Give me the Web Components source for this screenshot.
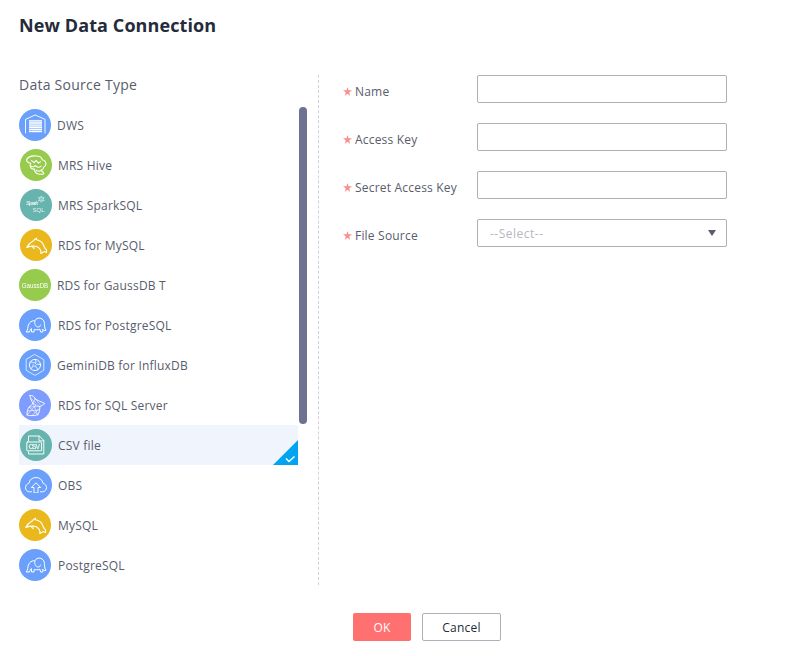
<!DOCTYPE html>
<html lang="en">
<head>
<meta charset="utf-8">
<title>New Data Connection</title>
<style>
html,body{margin:0;padding:0;background:#fff;}
body{font-family:"Open Sans","Noto Sans",sans-serif;color:#575d6c;letter-spacing:.2px;}
</style>
</head>
<body>
<x-dialog heading="New Data Connection">
  <x-source-list slot="left" heading="Data Source Type">
    <x-source-item icon="dws" label="DWS" gap="6"></x-source-item>
    <x-source-item icon="hive" label="MRS Hive" shift="1" gap="6"></x-source-item>
    <x-source-item icon="spark" label="MRS SparkSQL" shift="1" gap="6"></x-source-item>
    <x-source-item icon="dolphin" label="RDS for MySQL" shift="1" gap="6"></x-source-item>
    <x-source-item icon="gauss" label="RDS for GaussDB T" gap="6"></x-source-item>
    <x-source-item icon="elephant" label="RDS for PostgreSQL" gap="7"></x-source-item>
    <x-source-item icon="gemini" label="GeminiDB for InfluxDB" gap="6"></x-source-item>
    <x-source-item icon="sqlserver" label="RDS for SQL Server" gap="7"></x-source-item>
    <x-source-item icon="csv" label="CSV file" shift="1" gap="6" selected></x-source-item>
    <x-source-item icon="obs" label="OBS" shift="1" gap="6"></x-source-item>
    <x-source-item icon="dolphin" label="MySQL" gap="7"></x-source-item>
    <x-source-item icon="elephant" label="PostgreSQL" gap="7"></x-source-item>
  </x-source-list>
  <x-form-row slot="right" label="Name"><x-text-box></x-text-box></x-form-row>
  <x-form-row slot="right" label="Access Key"><x-text-box></x-text-box></x-form-row>
  <x-form-row slot="right" label="Secret Access Key"><x-text-box></x-text-box></x-form-row>
  <x-form-row slot="right" label="File Source"><x-select-box placeholder="--Select--"></x-select-box></x-form-row>
  <x-button slot="footer" variant="primary" width="58">OK</x-button>
  <x-button slot="footer" width="79">Cancel</x-button>
</x-dialog>
<script>
const S='fill="none" stroke="#fff" stroke-linecap="round" stroke-linejoin="round"';
const dolphin=`<path ${S} stroke-width="1.100" d="M6.800 18.600C7.800 16.400 9.800 14 12.400 12.600 13.600 11.400 14.800 10 16.600 9.200L16.400 10.800C19.800 11.300 22.600 13.300 23.800 16.700 24.400 18.400 25.200 19.900 26.600 20.900L26.500 23.400 24.400 22.500 20.800 24.500C21.300 22.200 20 19.400 17.200 17.800 15.800 17.100 13.800 16.900 12 17.100 10.200 17.300 8.400 17.800 6.800 18.600Z"/><path ${S} stroke-width="1" d="M13.800 17.200L14.200 19.800C13.200 19.300 12.400 18.400 12.100 17.300"/>`;
const elephant=`<path ${S} stroke-width="1" d="M7.500 22.700C9 21 8.700 18 9.500 15.800 10.500 13 13 11.500 15.700 11.800 16.800 9.800 19 8.700 21.200 9.200 24 9.800 25.300 12 25.400 14.500 25.500 17 25.700 19.500 27 21.300 25.800 22 24.500 21.500 23.800 20.300L23.800 23H21.500L21 20.300C19 20.900 17 20.900 15.200 20.400L15 23H12.600L12.400 19.500C11.500 20 11 21 10.600 22.700Z"/><path ${S} stroke-width=".9" d="M16 11.900C15 14.500 16.300 17.500 19 18 20.500 18.200 21.300 17.300 21.500 16"/>`;
const ICONS={
 dws:{c:'#6aa0fb',s:`<path ${S} stroke-width=".9" d="M6.500 24V10.300L16.200 6 26 10.300V24"/><path d="M10 10.800h13v13H10z" fill="#fff" fill-opacity=".25"/><path d="M10 11.900h13M10 14h13M10 16.100h13M10 18.200h13M10 20.300h13M10 22.400h13" stroke="#fff" stroke-width="1.350" fill="none"/>`},
 hive:{c:'#96cb4e',s:`<path ${S} stroke-width="1.100" d="M7 9.800c1.800-2.300 5-3.300 8.500-2.800 3.300-.2 6.100 1.300 6.800 3.700 1.900 .5 3.700 2.200 3.600 4.300-.1 1.500-.9 2.500-2 2.900-.3 1.900-1.500 3-2.900 3.400 1.400 .9 2.300 2.200 2.800 3.400-2.600 .9-5.500 .7-7.800-.7-1-1.100-1.500-2.500-1.300-4-1.700 .3-3.400-.4-4.100-1.800-.7-1.400-.5-2.700 .2-3.700C7 13.300 5.900 11.400 7 9.800z"/><path ${S} stroke-width="1.100" d="M11.600 11.600l2.600 2 1.900-2.200 2.400 2.700 2-1.300M11.300 17.200c1.300 .7 2.900 .5 4.100-.6 1.600 2 3.900 2.200 5.700 .6M16.300 21.400c1.500 .7 3.100 .9 4.600 .4"/>`},
 spark:{c:'#67b3ad',s:`<text x="6" y="15.900" letter-spacing="0" font-family="Liberation Sans,sans-serif" font-style="italic" font-weight="700" font-size="6.200" fill="#fff" fill-opacity=".75" textLength="12.500">Spark</text><path d="M21.300 6.800l.9 2 2.100-.4-1.300 1.700 1.300 1.700-2.100-.3-.9 1.900-.9-1.900-2.100.3 1.300-1.700-1.300-1.700 2.100.4z" fill="#fff" fill-opacity=".25" stroke="#fff" stroke-opacity=".8" stroke-width=".6"/><text x="12.400" y="23.300" letter-spacing="0" font-family="Liberation Sans,sans-serif" font-size="6.200" fill="#fff" fill-opacity=".85">SQL</text>`},
 dolphin:{c:'#eab71c',s:dolphin},
 gauss:{c:'#96cb4e',s:`<text x="16" y="18.500" letter-spacing="0" text-anchor="middle" font-family="Liberation Sans,sans-serif" font-size="7.100" fill="#fff" textLength="26.500" lengthAdjust="spacingAndGlyphs">GaussDB</text>`},
 elephant:{c:'#6aa0fb',s:elephant},
 gemini:{c:'#6aa0fb',s:`<path ${S} stroke-width=".85" stroke-opacity=".85" d="M16 5.600l8.800 5.100v10.600L16 26.400l-8.800-5.100V10.700z"/><circle cx="16" cy="16" r="5.600" ${S} stroke-width=".95"/><path ${S} stroke-width=".9" d="M16 10.600c1.300 1.600 1.400 3 .2 4.300M21.200 15.600c-1.800-.9-3.400-.7-4.500 .7M18.600 20.700c-.2-1.900-1.200-3.100-3-3.400M11.900 19.600c1.500-.9 2.300-2.200 2.300-3.700M11.300 12.700c1.500 .9 2.800 1.200 4 .8"/>`},
 sqlserver:{c:'#7f9cff',s:`<path ${S} stroke-width=".9" d="M11 6.500C13.500 6.300 15.500 7.500 16 9.500 18 11.500 22 12.500 25.800 14.500 24 16 22.500 17 20.800 17.500 21 20 20.500 23.500 18.800 25.800 15 26.800 11 26.800 8 26 8 23 8.500 20 10.200 18 11.500 16.500 13 15.500 14 14.500 12.500 12 11.200 9.500 11 6.500Z"/><path ${S} stroke-width=".6" d="M14 14.500L20.800 17.500M14 14.500L18.800 25.800M10.200 18L18.800 25.800M10.200 18L20.800 17.500M8 26L17 16M8.500 22L20.500 21M13 26.500L20.800 19M16 9.500L14 14.500M16 9.500L21 15.500M12 9.500L17 14"/>`},
 csv:{c:'#67b3ad',s:`<path ${S} stroke-width=".95" d="M8.500 12V7h10.800l4.500 4.500V25H8.500v-2.200"/><path ${S} stroke-width=".85" d="M19 7v4.800h4.800"/><rect x="6.800" y="13" width="14.800" height="8.800" rx=".6" ${S} stroke-width=".95"/><text x="14.200" y="20" letter-spacing="0" text-anchor="middle" font-family="Liberation Sans,sans-serif" font-weight="700" font-size="6.800" fill="#fff" fill-opacity=".85" textLength="11.500">CSV</text>`},
 obs:{c:'#6aa0fb',s:`<path ${S} stroke-width=".95" d="M11.500 22.800H9.500C7 22.800 5.500 20.700 5.500 18.500c0-2 1.400-3.700 3.400-4.100C9.500 10.700 12.300 8.500 16 8.500s6.400 2.300 7.100 5.900c2 .4 3.400 2.100 3.400 4.100 0 2.200-1.600 4.300-4 4.300H20.500"/><path ${S} stroke-width=".95" d="M14 23.500v-5h-2.700L16 13.800l4.700 4.700H18v5z"/>`}
};
function define(name,render){
  customElements.define(name,class extends HTMLElement{
    constructor(){super();this.attachShadow({mode:'open'});}
    connectedCallback(){this.shadowRoot.innerHTML=render(this);}
  });
}
define('x-dialog',el=>`<style>
:host{display:flex;flex-direction:column;width:806px;height:656px;box-sizing:border-box;background:#fff;overflow:hidden;}
h1{margin:0;padding:12px 0 0 19px;height:75px;box-sizing:border-box;font:700 18px/26px "Open Sans","Noto Sans",sans-serif;color:#252b3a;letter-spacing:.1px;}
.body{display:flex;height:510px;}
.left{width:299px;padding-left:19px;flex:none;}
.sep{width:0;border-left:1px dashed #cfd1d6;}
.right{flex:1;padding-left:24px;}
footer{display:flex;justify-content:center;gap:11px;padding:28px 0 0 48px;}
</style><h1>${el.getAttribute('heading')}</h1>
<div class="body"><div class="left"><slot name="left"></slot></div><div class="sep"></div><div class="right"><slot name="right"></slot></div></div>
<footer><slot name="footer"></slot></footer>`);
define('x-source-list',el=>`<style>
:host{display:block;width:299px;}
.title{height:30px;box-sizing:border-box;font-size:14px;line-height:20px;color:#575d6c;letter-spacing:.25px;}
.wrap{display:flex;}
.items{width:279px;flex:none;display:flex;flex-direction:column;}
.bar{width:8px;margin-left:1px;margin-top:2px;height:317px;border-radius:4px;background:#6c7290;}
</style><div class="title">${el.getAttribute('heading')}</div>
<div class="wrap"><div class="items"><slot></slot></div><div class="bar"></div></div>`);
define('x-source-item',el=>{
  const ic=ICONS[el.getAttribute('icon')];
  const shift=el.getAttribute('shift')||0, gap=el.getAttribute('gap')||6;
  const sel=el.hasAttribute('selected');
  return `<style>
:host{display:flex;align-items:center;height:40px;position:relative;box-sizing:border-box;font-size:12px;color:#575d6c;${sel?'background:#f0f4fc;':''}}
svg.i{width:32px;height:32px;flex:none;display:block;margin-left:${shift}px;}
svg.i g{filter:blur(.25px);}
span{margin:2px 0 0 ${gap}px;white-space:nowrap;line-height:16px;}
.mark{position:absolute;right:0;bottom:0;width:25px;height:25px;display:block;}
</style><svg class="i" viewBox="0 0 32 32"><circle cx="16" cy="16" r="16" fill="${ic.c}"/><g>${ic.s}</g></svg><span>${el.getAttribute('label')}</span>
${sel?`<svg class="mark" viewBox="0 0 25 25"><path d="M25 0V25H0z" fill="#00a4f0"/><path d="M13 18.500l3 3 5.500-5" fill="none" stroke="#fff" stroke-width="1.500"/></svg>`:''}`;
});
define('x-form-row',el=>`<style>
:host{display:flex;align-items:flex-start;height:48px;font-size:12px;color:#575d6c;}
svg{width:9px;height:9px;margin:12px 3px 0 0;flex:none;display:block;}
label{width:122px;flex:none;line-height:33px;white-space:nowrap;}
</style><svg viewBox="0 0 8 8"><path d="M4 0L4.950 2.900 8 2.900 5.500 4.800 6.500 8 4 6 1.500 8 2.500 4.800 0 2.900 3.050 2.900z" fill="#f8908b"/></svg><label>${el.getAttribute('label')}</label><slot></slot>`);
const boxCss=`:host{display:block;width:250px;height:28px;box-sizing:border-box;border:1px solid #adb0b8;border-radius:2px;background:#fff;}`;
define('x-text-box',()=>`<style>${boxCss}</style>`);
define('x-select-box',el=>`<style>${boxCss}
:host{display:flex;align-items:center;justify-content:space-between;padding:0 10px 0 12px;font-size:12px;color:#b4b7be;}
span{line-height:26px;margin-top:2px;letter-spacing:.5px;}
i{display:block;width:0;height:0;border-left:4.500px solid transparent;border-right:4.500px solid transparent;border-top:6px solid #575d6c;}
</style><span>${el.getAttribute('placeholder')}</span><i></i>`);
define('x-button',el=>{
  const p=el.getAttribute('variant')==='primary';
  return `<style>
:host{display:flex;align-items:center;justify-content:center;width:${el.getAttribute('width')}px;height:28px;box-sizing:border-box;border-radius:2px;font-size:12px;
${p?'background:#ff7070;color:#fff;':'background:#fff;border:1px solid #adb0b8;color:#252b3a;'}}
</style><slot></slot>`;
});
</script>
</body>
</html>
